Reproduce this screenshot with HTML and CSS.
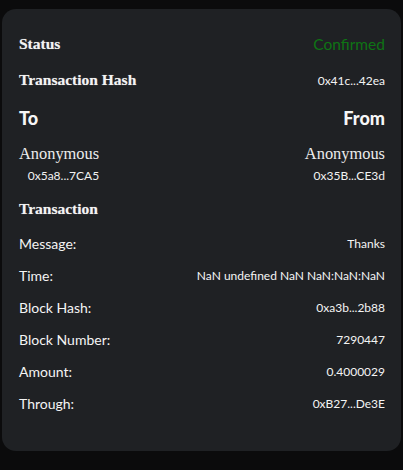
FILE: index.html
```html
<!DOCTYPE html>
<html>
<head>
<meta charset="utf-8">
<link rel="stylesheet" href="styles.css">
</head>
<body>
<div class="card">
  <div class="row head-row r-status">
    <span class="serif-bold">Status</span>
    <span class="confirmed">Confirmed</span>
  </div>
  <div class="row head-row r-hash">
    <span class="serif-bold">Transaction Hash</span>
    <span class="val">0x41c...42ea</span>
  </div>
  <div class="row r-tofrom">
    <span class="big">To</span>
    <span class="big">From</span>
  </div>
  <div class="row r-parties">
    <div class="party">
      <span class="anon">Anonymous</span>
      <span class="addr">0x5a8...7CA5</span>
    </div>
    <div class="party">
      <span class="anon">Anonymous</span>
      <span class="addr">0x35B...CE3d</span>
    </div>
  </div>
  <div class="row head-row r-tx">
    <span class="serif-bold">Transaction</span>
  </div>
  <div class="details">
    <div class="row detail"><span class="label">Message:</span><span class="val">Thanks</span></div>
    <div class="row detail"><span class="label">Time:</span><span class="val">NaN undefined NaN NaN:NaN:NaN</span></div>
    <div class="row detail"><span class="label">Block Hash:</span><span class="val">0xa3b...2b88</span></div>
    <div class="row detail"><span class="label">Block Number:</span><span class="val">7290447</span></div>
    <div class="row detail"><span class="label">Amount:</span><span class="val">0.4000029</span></div>
    <div class="row detail"><span class="label">Through:</span><span class="val">0xB27...De3E</span></div>
  </div>
</div>
</body>
</html>
```

FILE: styles.css
```css
html, body {
  margin: 0;
  padding: 0;
  background: #0b0b0c;
}
body {
  padding: 9px 2px 0 2px;
  width: 403px;
  height: 470px;
  box-sizing: border-box;
  overflow: hidden;
  font-family: Lato, "Liberation Sans", sans-serif;
  color: #f2f2f2;
}
.card {
  width: 399px;
  height: 442px;
  box-sizing: border-box;
  background: #1f2124;
  border-radius: 14px;
  padding: 24px 16px 0 17px;
  display: flex;
  flex-direction: column;
}
.row {
  display: flex;
  justify-content: space-between;
  align-items: center;
}
.head-row { height: 22px; }
.r-hash { margin-top: 14px; }
.r-tofrom { margin-top: 15px; height: 24px; }
.r-parties { margin-top: 14px; align-items: flex-start; }
.r-tx { margin-top: 14px; }
.details { margin-top: 7px; display: flex; flex-direction: column; }
.detail { height: 32px; }

.serif-bold {
  font-family: "Liberation Serif", "Times New Roman", serif;
  font-weight: bold;
  font-size: 15.5px;
  color: #f4f4f4;
  text-shadow: 0 0 1px rgba(255,255,255,0.45);
}
.confirmed {
  color: #0e7414;
  font-size: 15.5px;
}
.val {
  font-size: 12px;
  color: #f4f4f4;
}
.big {
  font-weight: 900;
  font-size: 18px;
  color: #f6f6f6;
}
.party {
  display: flex;
  flex-direction: column;
  align-items: flex-end;
}
.anon {
  font-family: "Liberation Serif", "Times New Roman", serif;
  font-size: 16.4px;
  height: 20px;
  line-height: 20px;
  color: #ececec;
}
.addr {
  margin-top: 4px;
  font-size: 12px;
  height: 16px;
  line-height: 16px;
}
.label {
  font-size: 14px;
  color: #f4f4f4;
}
```
